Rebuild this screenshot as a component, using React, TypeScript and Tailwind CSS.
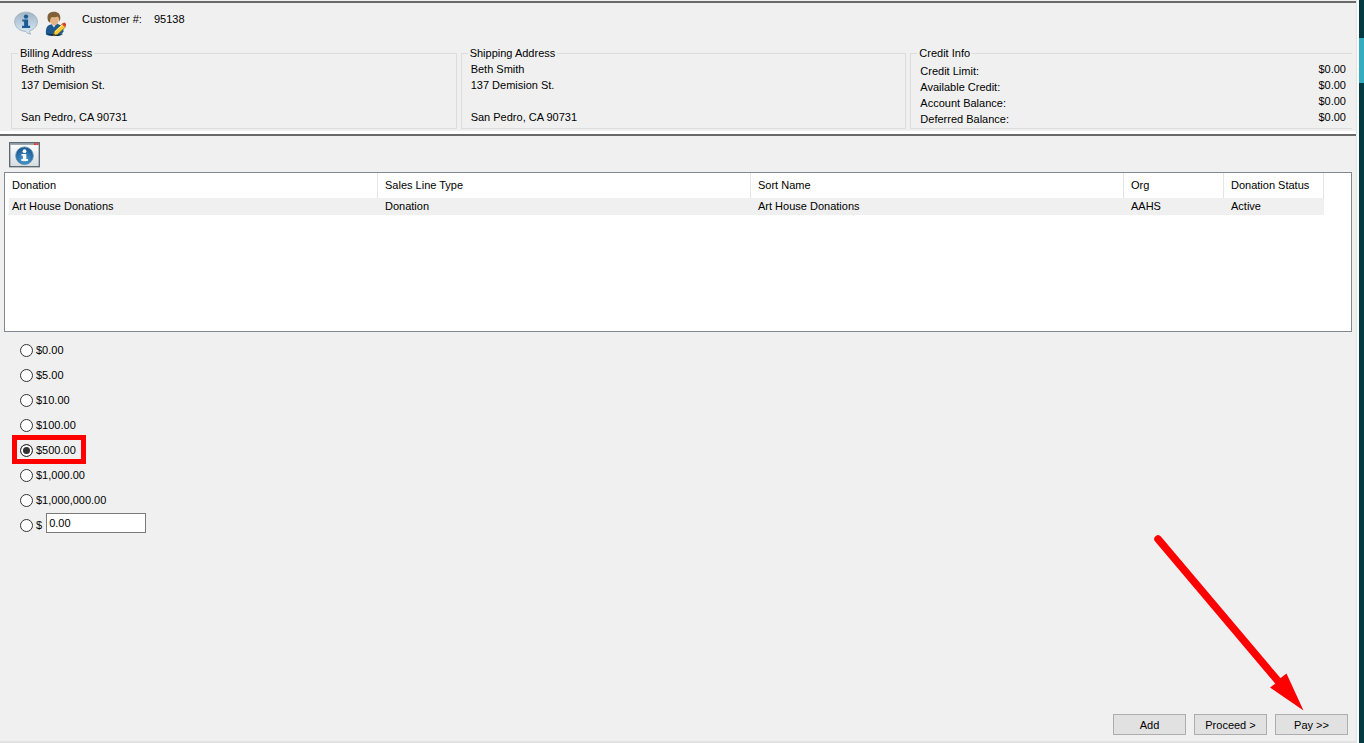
import React, { useState } from "react";

interface Donation {
  name: string;
  lineType: string;
  sortName: string;
  org: string;
  status: string;
}

const ADDRESS = ["Beth Smith", "137 Demision St.", "", "San Pedro, CA 90731"];

const CREDIT = [
  { label: "Credit Limit:", value: "$0.00" },
  { label: "Available Credit:", value: "$0.00" },
  { label: "Account Balance:", value: "$0.00" },
  { label: "Deferred Balance:", value: "$0.00" },
];

const DONATIONS: Donation[] = [
  {
    name: "Art House Donations",
    lineType: "Donation",
    sortName: "Art House Donations",
    org: "AAHS",
    status: "Active",
  },
];

const COLUMNS = ["Donation", "Sales Line Type", "Sort Name", "Org", "Donation Status"];

const AMOUNTS = ["$0.00", "$5.00", "$10.00", "$100.00", "$500.00", "$1,000.00", "$1,000,000.00"];

const HIGHLIGHTED = "$500.00";

const radioClass =
  "size-[13px] shrink-0 appearance-none rounded-full border border-[#333] bg-white checked:bg-[#333] checked:shadow-[inset_0_0_0_2px_white]";

function InfoBubbleIcon() {
  return (
    <svg width="24" height="24" viewBox="0 0 24 24">
      <defs>
        <linearGradient id="bubble" x1="0" y1="0" x2="0" y2="1">
          <stop offset="0" stopColor="#a3b3c1" />
          <stop offset="0.5" stopColor="#bccfdf" />
          <stop offset="1" stopColor="#dcebf5" />
        </linearGradient>
      </defs>
      <path
        d="M12 1.200C5.600 1.200 0.700 5.300 0.700 10.600s4.700 9.600 11 9.800c1 1.500 2.800 2.500 5.300 2.600-1.200-.9-1.500-2-1.300-3.200 4.500-1.400 7.700-4.900 7.700-9.200C23.400 5.300 18.400 1.200 12 1.200z"
        fill="url(#bubble)"
        stroke="#a3b4c1"
        strokeWidth="1"
      />
      <circle cx="12" cy="5.600" r="2.200" fill="#1c5c95" />
      <path d="M8.300 8.500h5.800v6.200h2v2.300H8v-2.300h2.100v-4.100H8.300z" fill="#1c5c95" />
    </svg>
  );
}

function EditUserIcon() {
  return (
    <svg width="22" height="26" viewBox="0 0 22 26">
      <path
        d="M1 23.500c-.5-5 .4-8.300 3.300-9.500l3.500-1.200h4.400l4 1.700c1.600 1 2.200 3 2.300 5.800-1 3-4 4.700-9 4.700-4 0-7-.5-8.500-1.500z"
        fill="#1f5990"
      />
      <path d="M1 22c2 2 6 3 10 3 3 0 5.500-.6 7-2-4 .5-12 .8-17-1z" fill="#092d50" />
      <path d="M6.500 13l2.500 3.500 2-3.500z" fill="#e8eef3" />
      <path d="M4.300 5C5 1.800 13.500 1.800 14 6.200c.2 4.800-1.700 8.200-4.500 8.200S4 10.500 4.300 5z" fill="#e2b587" />
      <path
        d="M3.100 10C1.400 4.500 3.500.800 8.500.800c4.600 0 7.500 2.400 6.700 7.700l-.9 2.300c.1-2-.3-3.800-1.400-5.200-2.200.9-4.300.8-6.300.3C5.300 7.200 4.900 9.500 5.200 12z"
        fill="#806039"
      />
      <path d="M8.200 24.500l1.200-4.100 8.300-7.800 3 3.200-8.400 7.700z" fill="#f4ca37" stroke="#8d6b13" strokeWidth=".7" />
      <path d="M10 20.700l8-7.400" stroke="#fff3a0" strokeWidth="1" />
      <path d="M17 13.200l1.700-1.500c1-.6 3 1.400 2.200 2.500l-1.300 1.500z" fill="#db3a2b" />
      <path d="M8.200 24.500l.6-2 1.300 1.300z" fill="#222" />
    </svg>
  );
}

function InfoWindowIcon() {
  return (
    <svg width="31" height="26" viewBox="0 0 31 26">
      <defs>
        <radialGradient id="ball" cx="0.5" cy="0.75" r="0.65">
          <stop offset="0" stopColor="#4ba0d6" />
          <stop offset="1" stopColor="#1d5c94" />
        </radialGradient>
        <linearGradient id="pane" x1="0" y1="0" x2="0" y2="1">
          <stop offset="0" stopColor="#ffffff" />
          <stop offset="1" stopColor="#d5dce0" />
        </linearGradient>
      </defs>
      <rect x=".7" y=".7" width="29.600" height="24" fill="url(#pane)" stroke="#56646e" strokeWidth="1.300" />
      <path d="M1.300 2h28.400" stroke="#84929c" strokeWidth="1.600" />
      <path d="M25 2.100h4.500" stroke="#f03226" strokeWidth="1.600" strokeDasharray="2 .5" />
      <circle cx="15.500" cy="13.700" r="8.800" fill="url(#ball)" stroke="#5b88aa" strokeWidth=".8" />
      <circle cx="15.500" cy="9.200" r="1.900" fill="#fff" />
      <path d="M12.500 12h4.800v5h1.600v1.900h-6.600V17h1.600v-3.200h-1.400z" fill="#fff" />
    </svg>
  );
}

function GroupBox({
  title,
  last,
  children,
}: {
  title: string;
  last?: boolean;
  children: React.ReactNode;
}) {
  return (
    <fieldset className={`h-[84px] border-y border-l border-[#dcdcdc] pl-[9px] ${last ? "mr-1" : "border-r"}`}>
      <legend className="-ml-[3px] px-[2px] leading-4">{title}</legend>
      {children}
    </fieldset>
  );
}

function AddressLines({ lines }: { lines: string[] }) {
  return (
    <address className="not-italic">
      {lines.map((line, i) => (
        <div key={i} className="h-4 leading-4">
          {line}
        </div>
      ))}
    </address>
  );
}

function CustomerHeader() {
  return (
    <header className="mt-px border-t-2 border-[#696969] pl-[11px]">
      <div className="flex h-[42px] pt-2 pl-[3px]">
        <InfoBubbleIcon />
        <div className="ml-[7px]">
          <EditUserIcon />
        </div>
        <span className="ml-[15px] leading-4">Customer #:</span>
        <span className="ml-3 leading-4">95138</span>
      </div>
      <div className="grid grid-cols-3 gap-1">
        <GroupBox title="Billing Address">
          <AddressLines lines={ADDRESS} />
        </GroupBox>
        <GroupBox title="Shipping Address">
          <AddressLines lines={ADDRESS} />
        </GroupBox>
        <GroupBox title="Credit Info" last>
          <dl className="pr-[6px]">
            {CREDIT.map((row) => (
              <div key={row.label} className="flex h-4 justify-between leading-4">
                <dt className="pt-[2px]">{row.label}</dt>
                <dd>{row.value}</dd>
              </div>
            ))}
          </dl>
        </GroupBox>
      </div>
    </header>
  );
}

function DonationTable() {
  return (
    <div className="mr-1 ml-1 h-40 border border-[#828790] bg-white">
      <table className="w-full table-fixed border-separate border-spacing-0 text-left">
        <colgroup>
          <col />
          <col />
          <col />
          <col className="w-[100px]" />
          <col className="w-[100px]" />
          <col className="w-[27px]" />
        </colgroup>
        <thead>
          <tr className="h-[25px]">
            {COLUMNS.map((c) => (
              <th key={c} className="border-r border-[#e5e5e5] pl-[7px] font-normal">
                {c}
              </th>
            ))}
            <td />
          </tr>
        </thead>
        <tbody>
          {DONATIONS.map((d) => (
            <tr key={d.name} className="h-[17px] leading-[17px]">
              <td className="pl-1">
                <div className="bg-[#f0f0f0] pl-[3px]">{d.name}</div>
              </td>
              <td className="bg-[#f0f0f0] pl-[7px]">{d.lineType}</td>
              <td className="bg-[#f0f0f0] pl-[7px]">{d.sortName}</td>
              <td className="bg-[#f0f0f0] pl-[7px]">{d.org}</td>
              <td className="bg-[#f0f0f0] pl-[7px]">{d.status}</td>
              <td />
            </tr>
          ))}
        </tbody>
      </table>
    </div>
  );
}

function AmountPicker() {
  const [selected, setSelected] = useState(HIGHLIGHTED);
  const [custom, setCustom] = useState("0.00");

  return (
    <div className="flex flex-col items-start pt-[6px] pl-5">
      {AMOUNTS.map((amount) => (
        <label key={amount} className="relative flex h-[25px] items-center gap-[3px]">
          <input
            type="radio"
            name="amount"
            className={radioClass}
            checked={selected === amount}
            onChange={() => setSelected(amount)}
          />
          {amount}
          {amount === HIGHLIGHTED && (
            <span className="pointer-events-none absolute -top-[3px] -right-[10px] -bottom-px -left-2 border-5 border-[#ff0000]" />
          )}
        </label>
      ))}
      <div className="flex items-start">
        <label className="flex h-[25px] items-center gap-[3px]">
          <input
            type="radio"
            name="amount"
            className={radioClass}
            checked={selected === "custom"}
            onChange={() => setSelected("custom")}
          />
          $
        </label>
        <input
          type="text"
          aria-label="Other amount"
          className="ml-1 h-5 w-[100px] border border-[#7a7a7a] bg-white pl-[2px]"
          value={custom}
          onChange={(e) => setCustom(e.target.value)}
        />
      </div>
    </div>
  );
}

function ActionButton({ children }: { children: React.ReactNode }) {
  return (
    <button type="button" className="h-[21px] w-[73px] border border-[#adadad] bg-[#e1e1e1] leading-4">
      {children}
    </button>
  );
}

function PointerArrow() {
  return (
    <svg
      className="pointer-events-none absolute right-[42px] bottom-full mb-[2px]"
      width="156"
      height="180"
      viewBox="0 0 156 180"
    >
      <path d="M8 7l120 142" stroke="#ff0000" strokeWidth="7.500" strokeLinecap="round" />
      <path d="M153.500 178.500l-17-37-6.500 5-4.500 5-5.500 4z" fill="#ff0000" />
    </svg>
  );
}

export default function App() {
  return (
    <div className="flex min-h-screen bg-[#f0f0f0] font-['Liberation_Sans',Arial,sans-serif] text-[11px] text-black">
      <main className="flex flex-1 flex-col border-r border-b-2 border-[#e3e3e3]">
        <CustomerHeader />
        <div className="mt-[2px] h-[3px] bg-white" />
        <section className="flex flex-1 flex-col border-t-2 border-[#696969]">
          <button type="button" aria-label="Donation info" className="mt-[6px] mb-1 ml-[9px] h-[26px] w-[31px]">
            <InfoWindowIcon />
          </button>
          <DonationTable />
          <AmountPicker />
          <footer className="mt-auto mr-2 mb-[6px] flex justify-end gap-2">
            <ActionButton>Add</ActionButton>
            <ActionButton>Proceed &gt;</ActionButton>
            <div className="relative flex">
              <ActionButton>Pay &gt;&gt;</ActionButton>
              <PointerArrow />
            </div>
          </footer>
        </section>
      </main>
      <aside className="w-[7px] border-l-2 border-white bg-[#043a42] pt-[38px]">
        <div className="h-[45px] bg-[#35adc0]" />
      </aside>
    </div>
  );
}
